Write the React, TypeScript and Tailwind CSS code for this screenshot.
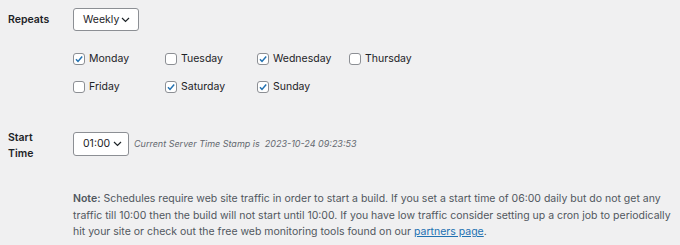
import React from 'react';

const days: { name: string; checked: boolean }[][] = [
  [
    { name: 'Monday', checked: true },
    { name: 'Tuesday', checked: false },
    { name: 'Wednesday', checked: true },
    { name: 'Thursday', checked: false },
  ],
  [
    { name: 'Friday', checked: false },
    { name: 'Saturday', checked: true },
    { name: 'Sunday', checked: true },
  ],
];

function Chevron() {
  return (
    <svg width="9" height="6" viewBox="0 0 9 6" className="shrink-0">
      <path d="M1 1l3.5 3.5L8 1" fill="none" stroke="#1d2327" strokeWidth="1.2" />
    </svg>
  );
}

function Box({ checked }: { checked: boolean }) {
  return (
    <span className="flex items-center justify-center w-[12px] h-[12px] rounded-[3px] border border-[#8c8f94] bg-white shrink-0">
      {checked && (
        <svg width="10" height="10" viewBox="0 0 10 10">
          <path d="M2 5.2l2 2.2L8.2 2.4" fill="none" stroke="#2271b1" strokeWidth="1.5" />
        </svg>
      )}
    </span>
  );
}

export default function App() {
  return (
    <div
      className="w-[680px] h-[245px] bg-[#f0f0f1] text-[#1d2327] text-[10.5px] overflow-hidden"
      style={{ fontFamily: 'Inter, "Liberation Sans", sans-serif' }}
    >
      <div className="flex pt-[8px]">
        <div className="w-[73px] pl-[8px] font-semibold h-[23px] flex items-center">Repeats</div>
        <div className="flex flex-col">
          <div className="flex items-center justify-between w-[66px] h-[23px] pl-[9px] pr-[8px] rounded-[3px] border border-[#8c8f94] bg-white">
            <span>Weekly</span>
            <Chevron />
          </div>
          <div className="flex flex-col gap-[16px] mt-[22px]">
            {days.map((row, i) => (
              <div key={i} className="flex">
                {row.map(d => (
                  <label key={d.name} className="flex items-center gap-[4px] w-[92px] h-[12px]">
                    <Box checked={d.checked} />
                    <span>{d.name}</span>
                  </label>
                ))}
              </div>
            ))}
          </div>
        </div>
      </div>

      <div className="flex mt-[39px]">
        <div className="w-[73px] pl-[8px] font-semibold leading-[16px] -mt-[2px]">
          Start
          <br />
          Time
        </div>
        <div className="flex items-center gap-[5px] h-[24px] self-start">
          <div className="flex items-center justify-between w-[56px] h-[24px] pl-[9px] pr-[6px] rounded-[3px] border border-[#8c8f94] bg-white">
            <span>01:00</span>
            <Chevron />
          </div>
          <span className="italic text-[9px] text-[#646970]">
            Current Server Time Stamp is &nbsp;2023-10-24 09:23:53
          </span>
        </div>
      </div>

      <p className="ml-[73px] mr-[3px] mt-[29px] leading-[16.5px] text-[#50575e]">
        <span className="font-semibold">Note:</span> Schedules require web site traffic in order to start a build. If you set a start time of 06:00 daily but do not get any traffic till 10:00 then the build will not start until 10:00. If you have low traffic consider setting up a cron job to periodically hit your site or check out the free web monitoring tools found on our{' '}
        <a className="text-[#2271b1] underline">partners page</a>.
      </p>
    </div>
  );
}
